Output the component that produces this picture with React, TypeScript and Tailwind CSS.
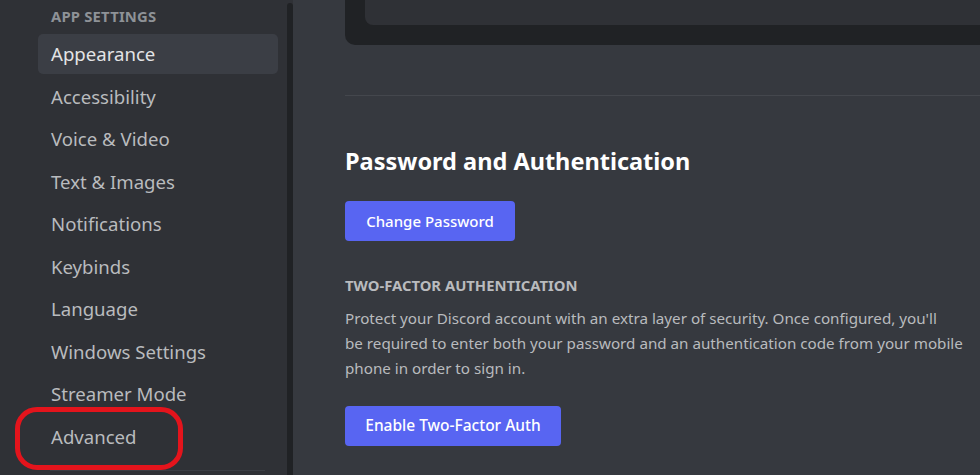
import React from "react";

const items = [
  "Appearance",
  "Accessibility",
  "Voice & Video",
  "Text & Images",
  "Notifications",
  "Keybinds",
  "Language",
  "Windows Settings",
  "Streamer Mode",
  "Advanced",
];

export default function App() {
  return (
    <div
      className="flex h-[475px] w-[980px] overflow-hidden bg-[#36393f]"
      style={{ fontFamily: '"Noto Sans", "Open Sans", sans-serif' }}
    >
      {/* Sidebar */}
      <div className="relative flex w-[293px] shrink-0 bg-[#2f3136]">
        <div className="flex w-[287px] flex-col pl-[38px] pr-[9px]">
          <div className="mt-[6px] h-[28px] pl-[13px] text-[14.8px] font-bold uppercase leading-[20px] tracking-[0.2px] text-[#8e9297]">
            App Settings
          </div>
          <div className="flex flex-col gap-[2.5px]">
            {items.map((it, i) => (
              <div
                key={it}
                className={
                  "relative flex h-[40px] items-center rounded-[5px] pl-[13px] text-[18.6px] " +
                  (i === 0 ? "bg-[#3b3e45] text-[#e3e4e6]" : "text-[#b9bbbe]")
                }
              >
                {it}
                {it === "Advanced" && (
                  <div className="pointer-events-none absolute left-[-23px] top-[-10px] h-[63px] w-[168px] rounded-[22px] border-[5px] border-[#e4141c]" />
                )}
              </div>
            ))}
          </div>
          <div className="ml-[12px] mt-[13px] h-px w-[215px] bg-[#3b3e44]" />
        </div>
        <div className="mt-[3px] w-[6px] rounded-t-[3px] bg-[#202225]" />
      </div>

      {/* Main */}
      <div className="flex-1 pl-[52px]">
        <div className="h-[45px] rounded-bl-[10px] bg-[#202225] pl-[20px]">
          <div className="h-[25px] rounded-bl-[8px] bg-[#2f3136]" />
        </div>
        <div className="mt-[50px] h-px bg-[#44474d]" />
        <h2 className="mt-[50px] text-[23.5px] font-bold leading-[30px] text-white">
          Password and Authentication
        </h2>
        <button className="mt-[25px] flex h-[40px] w-[170px] items-center justify-center rounded-[4px] bg-[#5865f2] text-[15px] font-medium text-white">
          Change Password
        </button>
        <div className="mt-[34px] text-[14.8px] font-bold uppercase leading-[20px] text-[#b9bbbe]">
          Two-Factor Authentication
        </div>
        <p className="mt-[11px] text-[15.2px] leading-[25px] text-[#b9bbbe]">
          <span className="block whitespace-nowrap">
            Protect your Discord account with an extra layer of security. Once configured, you'll
          </span>
          <span className="block whitespace-nowrap">
            be required to enter both your password and an authentication code from your mobile
          </span>
          <span className="block whitespace-nowrap">phone in order to sign in.</span>
        </p>
        <button className="mt-[25px] flex h-[40px] w-[216px] items-center justify-center rounded-[4px] bg-[#5865f2] text-[15.5px] font-medium text-white">
          Enable Two-Factor Auth
        </button>
      </div>
    </div>
  );
}
